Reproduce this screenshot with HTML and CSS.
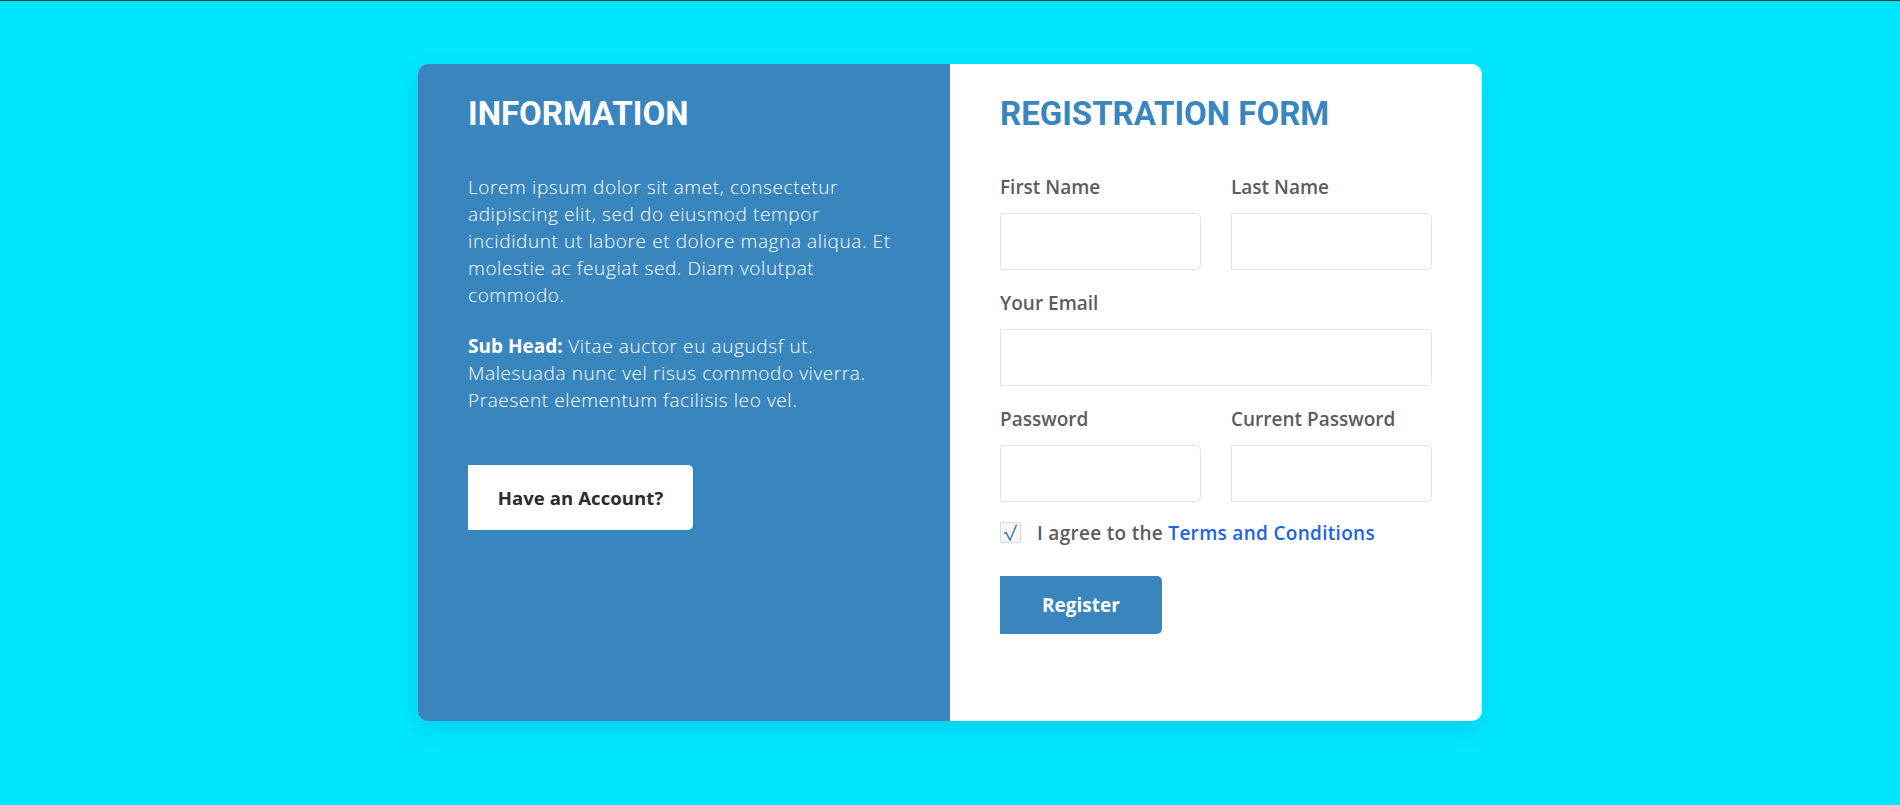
FILE: index.html
```html
<!DOCTYPE html>
<html lang="en">
<head>
<meta charset="utf-8">
<title>Registration</title>
<link rel="stylesheet" href="styles.css">
</head>
<body>
<main class="card">
  <section class="info">
    <h2 class="info-title">INFORMATION</h2>
    <p class="info-text">Lorem ipsum dolor sit amet, consectetur adipiscing elit, sed do eiusmod tempor incididunt ut labore et dolore magna aliqua. Et molestie ac feugiat sed. Diam volutpat commodo.</p>
    <p class="info-text"><strong class="sub-head">Sub Head:</strong> Vitae auctor eu augudsf ut. Malesuada nunc vel risus commodo viverra. Praesent elementum facilisis leo vel.</p>
    <button class="btn-account" type="button">Have an Account?</button>
  </section>
  <section class="form-panel">
    <h2 class="form-title">REGISTRATION FORM</h2>
    <form class="form">
      <div class="row two">
        <div class="field">
          <label class="label">First Name</label>
          <input class="input" type="text">
        </div>
        <div class="field">
          <label class="label">Last Name</label>
          <input class="input" type="text">
        </div>
      </div>
      <div class="row">
        <div class="field">
          <label class="label">Your Email</label>
          <input class="input" type="email">
        </div>
      </div>
      <div class="row two">
        <div class="field">
          <label class="label">Password</label>
          <input class="input" type="password">
        </div>
        <div class="field">
          <label class="label">Current Password</label>
          <input class="input" type="password">
        </div>
      </div>
      <div class="agree">
        <span class="checkbox">
          <svg width="21" height="21" viewBox="0 0 21 21"><path d="M4.5 11.2 L6.2 10.6 L10 18.2 L16.3 3.2" fill="none" stroke="#3a86c0" stroke-width="1.6" stroke-linejoin="round" stroke-linecap="round"/></svg>
        </span>
        <span class="agree-text">I agree to the <a class="link" href="#">Terms and Conditions</a></span>
      </div>
      <button class="btn-register" type="button">Register</button>
    </form>
  </section>
</main>
</body>
</html>
```

FILE: styles.css
```css
* { box-sizing: border-box; }

html, body {
  margin: 0;
  padding: 0;
}

body {
  background: #00e6ff;
  border-top: 1px solid #1d3d49;
  min-height: 805px;
  font-family: "Open Sans", "Noto Sans", sans-serif;
}

.card {
  width: 1064px;
  min-height: 657px;
  margin: 63px auto 0;
  display: grid;
  grid-template-columns: 1fr 1fr;
  border-radius: 10px;
  overflow: hidden;
  box-shadow: 0 8px 22px rgba(0, 60, 90, 0.12);
}

.info {
  background: #3986be;
  padding: 30px 50px;
  color: #ffffff;
}

.form-panel {
  background: #ffffff;
  padding: 30px 50px;
}

.info-title,
.form-title {
  font-family: Roboto, "Liberation Sans", sans-serif;
  font-weight: 700;
  font-size: 33px;
  line-height: 40px;
  margin: 0 0 40px;
}

.info-title { color: #ffffff; }
.form-title { color: #3986be; }

.info-text {
  font-size: 19px;
  font-weight: 300;
  letter-spacing: 0.6px;
  line-height: 27px;
  margin: 0 0 24px;
}

.sub-head {
  font-weight: 700;
  letter-spacing: 0;
}

.btn-account {
  display: block;
  margin-top: 51px;
  width: 225px;
  height: 65px;
  padding: 0;
  border: none;
  border-radius: 0 5px 5px 0;
  background: #ffffff;
  color: #2b2b2b;
  font-family: "Open Sans", sans-serif;
  font-weight: 700;
  font-size: 18.5px;
  letter-spacing: 0.1px;
  cursor: pointer;
}

.form {
  margin: 0;
}

.row {
  display: grid;
  grid-template-columns: 1fr;
  margin-bottom: 20px;
}

.row.two {
  grid-template-columns: 1fr 1fr;
  column-gap: 30px;
}

.field {
  display: flex;
  flex-direction: column;
}

.label {
  font-size: 19px;
  font-weight: 600;
  line-height: 27px;
  color: #5c5c5c;
  margin-bottom: 12px;
}

.input {
  display: block;
  width: 100%;
  height: 57px;
  border: 1px solid #e5e5e5;
  border-radius: 0 5px 5px 0;
  background: #ffffff;
  font-family: inherit;
  font-size: 16px;
}

.agree {
  display: flex;
  align-items: flex-start;
  gap: 16px;
  margin-top: -2px;
  margin-bottom: 29px;
}

.checkbox {
  width: 21px;
  height: 21px;
  margin-top: 2px;
  border: 1px solid #d9d9d9;
  border-radius: 2px;
  background: #f7f7f7;
  display: flex;
  flex: none;
}

.checkbox svg {
  display: block;
  margin: -1px;
}

.agree-text {
  font-size: 19px;
  font-weight: 600;
  letter-spacing: 0.3px;
  line-height: 27px;
  color: #5c5c5c;
}

.link {
  color: #1d62e2;
  text-decoration: none;
}

.btn-register {
  display: block;
  width: 162px;
  height: 58px;
  padding: 0;
  border: none;
  border-radius: 0 5px 5px 0;
  background: #3986be;
  color: #ffffff;
  font-family: "Open Sans", sans-serif;
  font-weight: 700;
  font-size: 19px;
  cursor: pointer;
}
```
